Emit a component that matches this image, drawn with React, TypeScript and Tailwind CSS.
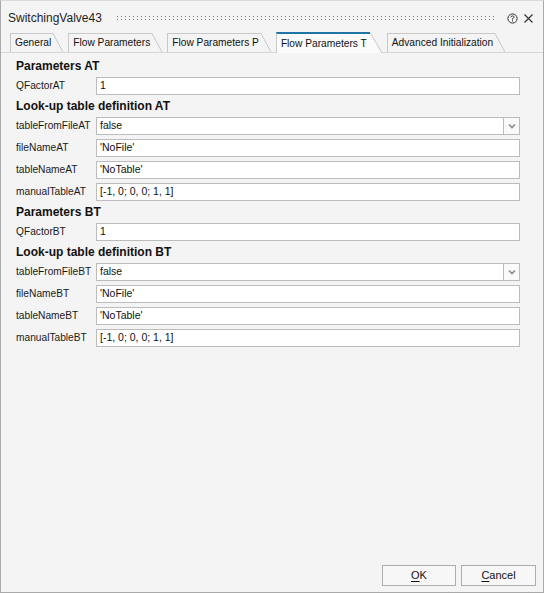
import React from "react";

const FONT = { fontFamily: '"Liberation Sans", Arial, sans-serif' };

type Field = { label: string; value: string; select?: boolean };
type Group = { title: string; fields: Field[] };

const GROUPS: Group[] = [
  { title: "Parameters AT", fields: [{ label: "QFactorAT", value: "1" }] },
  {
    title: "Look-up table definition AT",
    fields: [
      { label: "tableFromFileAT", value: "false", select: true },
      { label: "fileNameAT", value: "'NoFile'" },
      { label: "tableNameAT", value: "'NoTable'" },
      { label: "manualTableAT", value: "[-1, 0; 0, 0; 1, 1]" },
    ],
  },
  { title: "Parameters BT", fields: [{ label: "QFactorBT", value: "1" }] },
  {
    title: "Look-up table definition BT",
    fields: [
      { label: "tableFromFileBT", value: "false", select: true },
      { label: "fileNameBT", value: "'NoFile'" },
      { label: "tableNameBT", value: "'NoTable'" },
      { label: "manualTableBT", value: "[-1, 0; 0, 0; 1, 1]" },
    ],
  },
];

const TABS = ["General", "Flow Parameters", "Flow Parameters P", "Flow Parameters T", "Advanced Initialization"];
const ACTIVE = "Flow Parameters T";

function Tab({ label }: { label: string }) {
  const active = label === ACTIVE;
  if (active) {
    return (
      <div className="flex items-end -mb-px relative z-10">
        <div className="h-[21px] border-l border-[#c8c8c8] border-t-2 border-t-[#1f74a8] bg-[#fbfbfb] pl-[4px] pr-[3px] flex items-center text-[#111]">
          {label}
        </div>
        <svg width="12" height="21" className="block">
          <polygon points="0,0 0.5,0 12,21 0,21" fill="#fbfbfb" />
          <line x1="0" y1="0.5" x2="12" y2="21" stroke="#c8c8c8" strokeWidth="1" />
        </svg>
      </div>
    );
  }
  return (
    <div className="flex items-end">
      <div className="h-[19px] border-l border-t border-[#c8c8c8] pl-[4px] pr-[2px] flex items-center text-[#111]">
        {label}
      </div>
      <svg width="10" height="19" className="block">
        <line x1="0" y1="0.5" x2="10" y2="19" stroke="#c8c8c8" strokeWidth="1" />
      </svg>
    </div>
  );
}

function Row({ f }: { f: Field }) {
  return (
    <div className="flex items-center h-[18px]">
      <div className="w-[80px] text-[10.2px] text-[#1a1a1a] whitespace-nowrap">{f.label}</div>
      {f.select ? (
        <div className="flex w-[424px] h-[18px]">
          <div className="flex-1 border border-[#bcbcbc] bg-white pl-[3px] flex items-center text-[10.5px] text-[#111]">
            {f.value}
          </div>
          <div className="w-[16px] border border-[#bcbcbc] border-l-0 bg-[#fafafa] flex items-center justify-center">
            <svg width="8" height="6" viewBox="0 0 8 6">
              <path d="M1 1.5 L4 4.5 L7 1.5" stroke="#8a8a8a" strokeWidth="1.6" fill="none" />
            </svg>
          </div>
        </div>
      ) : (
        <div className="w-[424px] h-[18px] border border-[#bcbcbc] bg-white pl-[3px] flex items-center text-[10.5px] text-[#111]">
          {f.value}
        </div>
      )}
    </div>
  );
}

export default function App() {
  return (
    <div
      style={FONT}
      className="w-[544px] h-[593px] bg-[#f4f4f4] border border-[#a9a9a9] border-t-[#dadada] flex flex-col overflow-hidden"
    >
      {/* title bar */}
      <div className="h-[31px] flex items-start pt-[10px] pl-[7px] pr-[9px]">
        <span className="text-[12px] leading-[15px] text-[#1e1e1e]">SwitchingValve43</span>
        <svg className="ml-[15px] mt-[5px] mr-[6px] flex-1" height="5">
          <defs>
            <pattern id="grip" x="0" y="0" width="4" height="3" patternUnits="userSpaceOnUse">
              <rect x="0" y="0" width="1" height="1" fill="#7a7a7a" />
            </pattern>
          </defs>
          <rect x="0" y="0" width="100%" height="5" fill="url(#grip)" />
        </svg>
        <svg className="ml-[6px] mt-[2px]" width="11" height="11" viewBox="0 0 11 11">
          <circle cx="5.5" cy="5.5" r="4.6" stroke="#333" strokeWidth="1" fill="none" />
          <path d="M3.9 4.3 Q3.9 2.9 5.5 2.9 Q7.1 2.9 7.1 4.2 Q7.1 5 5.5 5.6 V6.6" stroke="#333" strokeWidth="1" fill="none" />
          <rect x="5" y="7.4" width="1.1" height="1.1" fill="#333" />
        </svg>
        <svg className="ml-[5px] mt-[2px]" width="11" height="11" viewBox="0 0 11 11">
          <path d="M1.5 1.5 L9.5 9.5 M9.5 1.5 L1.5 9.5" stroke="#333" strokeWidth="1.1" />
        </svg>
      </div>

      {/* tabs */}
      <div className="h-[21px] flex items-end gap-[5px] pl-[9px] border-b border-[#d6d6d6] text-[10.2px]">
        {TABS.map((t) => (
          <Tab key={t} label={t} />
        ))}
      </div>

      {/* form */}
      <div className="flex-1 flex flex-col gap-[4px] pt-[6px] pl-[15px]">
        {GROUPS.map((g) => (
          <React.Fragment key={g.title}>
            <div className="h-[14px] flex items-center text-[12px] font-bold text-[#111] whitespace-nowrap">
              {g.title}
            </div>
            {g.fields.map((f) => (
              <Row key={f.label} f={f} />
            ))}
          </React.Fragment>
        ))}
      </div>

      {/* footer */}
      <div className="flex justify-end gap-[5px] pr-[7px] pb-[6px]">
        <button className="w-[74px] h-[21px] border border-[#adadad] bg-[#f7f7f7] text-[11px] text-[#111]">
          <span className="underline underline-offset-2">O</span>K
        </button>
        <button className="w-[75px] h-[21px] border border-[#adadad] bg-[#f7f7f7] text-[11px] text-[#111]">
          <span className="underline underline-offset-2">C</span>ancel
        </button>
      </div>
    </div>
  );
}
